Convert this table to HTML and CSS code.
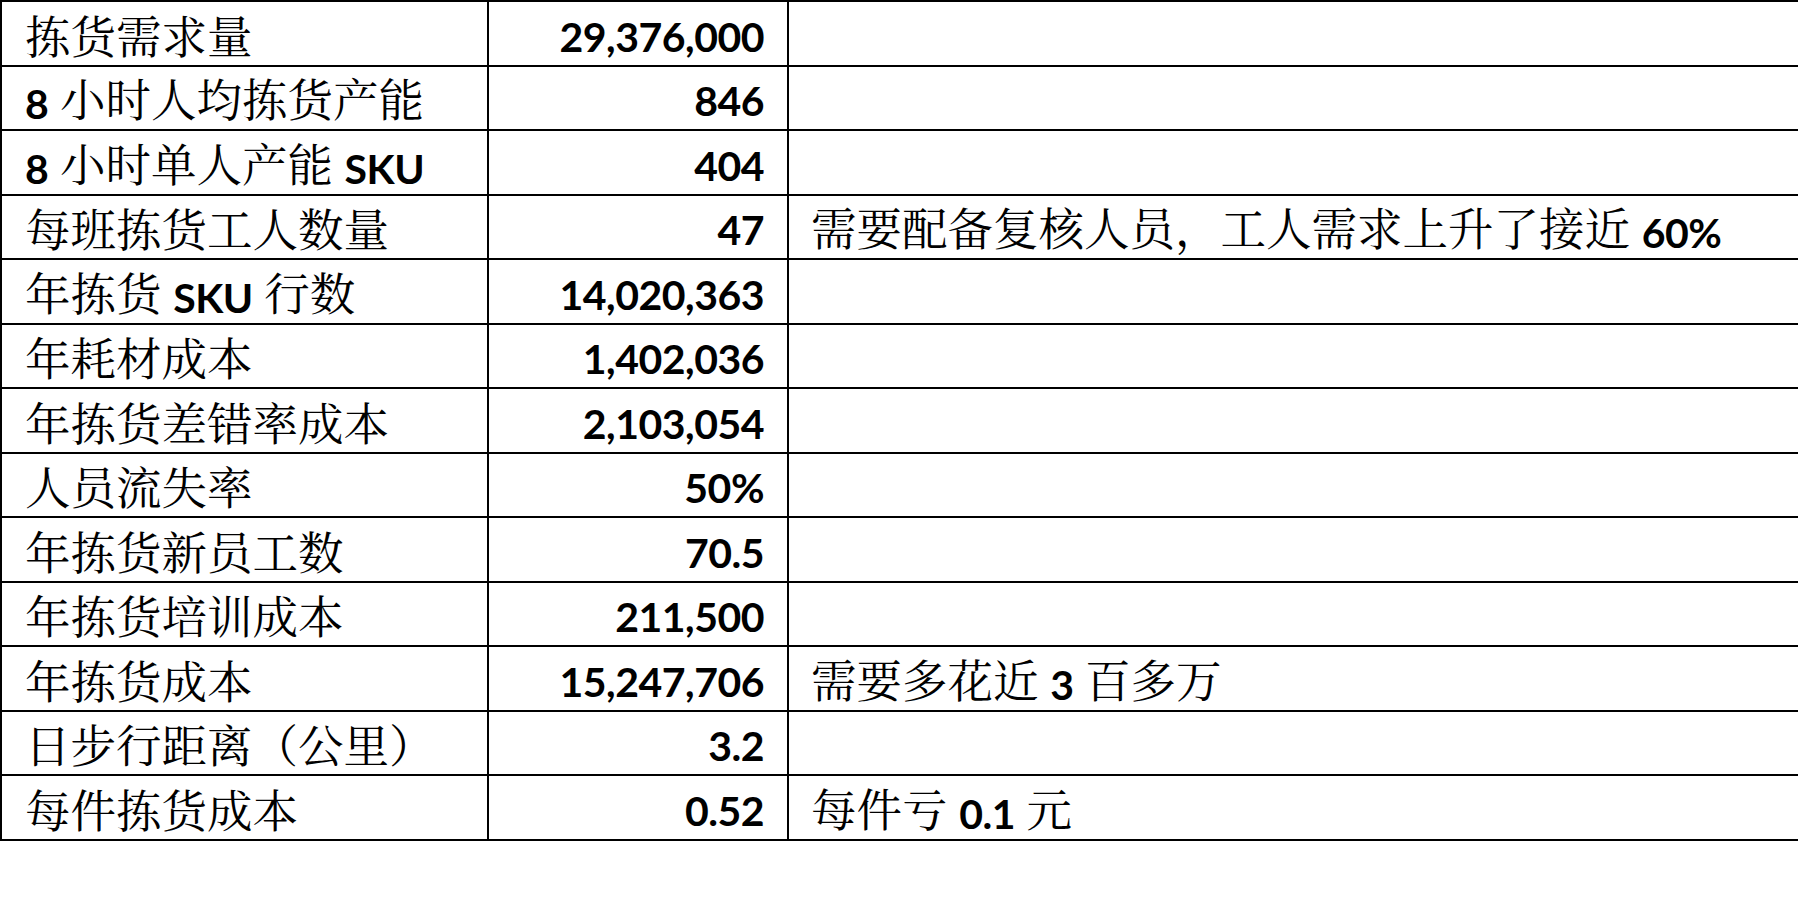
FILE: index.html
```html
<!DOCTYPE html>
<html lang="zh-CN">
<head>
<meta charset="utf-8">
<title>拣货成本</title>
<link rel="stylesheet" href="styles.css">
</head>
<body>
<div class="sheet">
  <div class="row"><div class="c label"><span class="t">拣货需求量</span></div><div class="c num"><span class="t l">29,376,000</span></div><div class="c note"></div></div>
  <div class="row"><div class="c label"><span class="t"><span class="l">8</span> 小时人均拣货产能</span></div><div class="c num"><span class="t l">846</span></div><div class="c note"></div></div>
  <div class="row"><div class="c label"><span class="t"><span class="l">8</span> 小时单人产能 <span class="l">SKU</span></span></div><div class="c num"><span class="t l">404</span></div><div class="c note"></div></div>
  <div class="row"><div class="c label"><span class="t">每班拣货工人数量</span></div><div class="c num"><span class="t l">47</span></div><div class="c note"><span class="t">需要配备复核人员，工人需求上升了接近 <span class="l">60%</span></span></div></div>
  <div class="row"><div class="c label"><span class="t">年拣货 <span class="l">SKU</span> 行数</span></div><div class="c num"><span class="t l">14,020,363</span></div><div class="c note"></div></div>
  <div class="row"><div class="c label"><span class="t">年耗材成本</span></div><div class="c num"><span class="t l">1,402,036</span></div><div class="c note"></div></div>
  <div class="row"><div class="c label"><span class="t">年拣货差错率成本</span></div><div class="c num"><span class="t l">2,103,054</span></div><div class="c note"></div></div>
  <div class="row"><div class="c label"><span class="t">人员流失率</span></div><div class="c num"><span class="t l">50%</span></div><div class="c note"></div></div>
  <div class="row"><div class="c label"><span class="t">年拣货新员工数</span></div><div class="c num"><span class="t l">70.5</span></div><div class="c note"></div></div>
  <div class="row"><div class="c label"><span class="t">年拣货培训成本</span></div><div class="c num"><span class="t l">211,500</span></div><div class="c note"></div></div>
  <div class="row"><div class="c label"><span class="t">年拣货成本</span></div><div class="c num"><span class="t l">15,247,706</span></div><div class="c note"><span class="t">需要多花近 <span class="l">3</span> 百多万</span></div></div>
  <div class="row"><div class="c label"><span class="t">日步行距离（公里）</span></div><div class="c num"><span class="t l">3.2</span></div><div class="c note"></div></div>
  <div class="row"><div class="c label"><span class="t">每件拣货成本</span></div><div class="c num"><span class="t l">0.52</span></div><div class="c note"><span class="t">每件亏 <span class="l">0.1</span> 元</span></div></div>
</div>
</body>
</html>
```

FILE: styles.css
```css
html, body {
  margin: 0;
  padding: 0;
  background: #ffffff;
  overflow: hidden;
}

body {
  width: 1798px;
  height: 904px;
  font-family: "Noto Serif CJK SC", "AR PL UMing CN", "Noto Sans CJK SC", serif;
  color: #000000;
}

.sheet {
  display: grid;
  grid-template-columns: 487px 300px 1fr;
  grid-auto-rows: 64.5px;
  border-top: 2px solid #000;
  border-left: 2px solid #000;
  width: 1796px;
}

.row {
  display: contents;
}

.c {
  box-sizing: border-box;
  border-bottom: 2px solid #000;
  display: flex;
  align-items: center;
  padding-top: 2px;
  font-size: 45.5px;
  line-height: 1;
  white-space: nowrap;
  overflow: hidden;
}

.t {
  white-space: pre;
}

.label {
  border-right: 2px solid #000;
  padding-left: 23px;
}

.num {
  border-right: 2px solid #000;
  justify-content: flex-end;
  padding-right: 23px;
}

.note {
  padding-left: 22px;
}

.l {
  font-family: "Lato", "Open Sans", sans-serif;
  font-weight: 700;
  font-size: 41px;
  letter-spacing: -0.5px;
  position: relative;
  top: 2px;
}
```
